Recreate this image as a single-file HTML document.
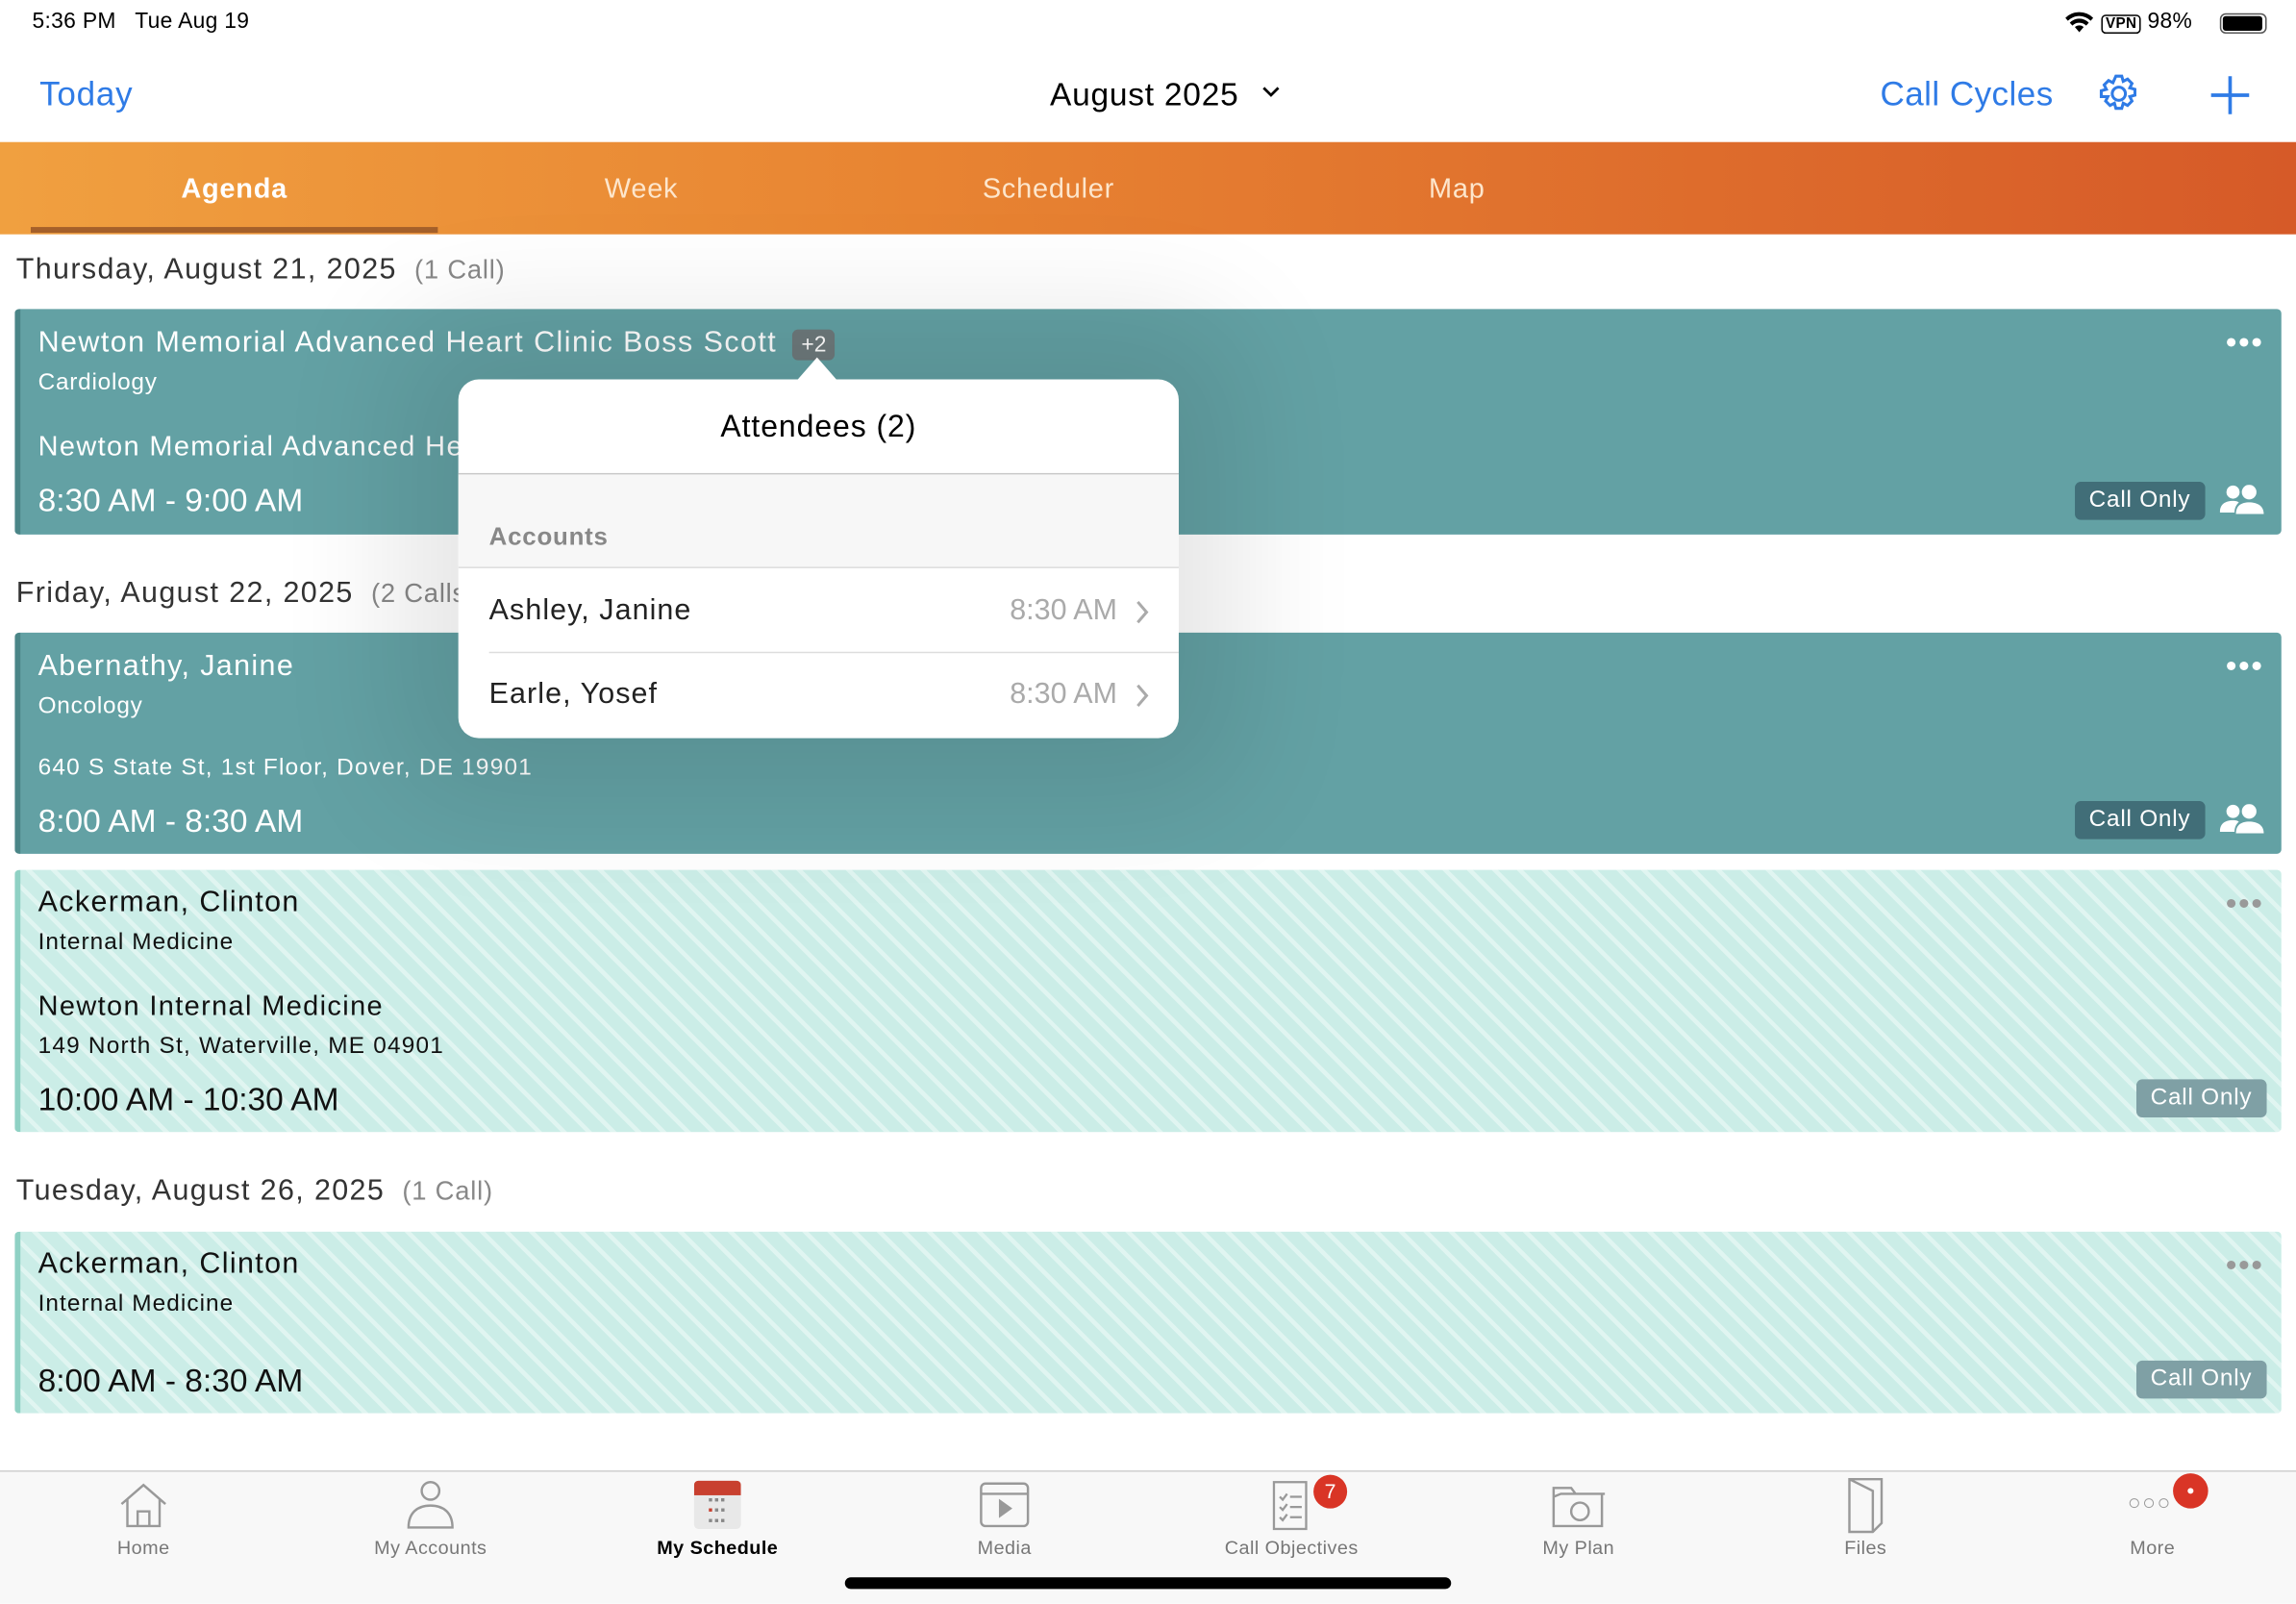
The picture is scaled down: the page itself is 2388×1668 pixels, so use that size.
<!DOCTYPE html>
<html><head><meta charset="utf-8"><style>
*{box-sizing:border-box;margin:0;padding:0}
html,body{width:2388px;height:1668px;overflow:hidden;background:#fff}
#w{width:1568px;height:1095px;transform:scale(1.52296);transform-origin:0 0;position:relative;font-family:"Liberation Sans",sans-serif;background:#fff;letter-spacing:.5px}
.abs{position:absolute}
.card{position:absolute;left:10px;width:1548px;border-left:4px solid #4a8587;border-radius:3px}
.t{background:#63a1a4;color:#fff}
.s{background:#cbede7 repeating-linear-gradient(45deg,#cbede7 0 9px,#e0f5f1 9px 12px);border-left-color:#8fd1c4;color:#111}
.co{position:absolute;background:#416e78;color:#fff;font-size:16px;padding:4px 10px;border-radius:4px;letter-spacing:.5px}
.s .co{background:#7fa0a5}
.dots{position:absolute;right:12px;font-size:22px;letter-spacing:1px;line-height:10px}
.tab{position:absolute;top:119px;font-size:19px;color:#fde6cc;width:278px;text-align:center}
.nav{position:absolute;top:1049px;font-size:13px;color:#777;width:196px;text-align:center;letter-spacing:.3px}
.ppl{position:absolute;right:12px}
</style></head><body><div id="w">
<div class="abs" style="left:22px;top:6px;font-size:15px;color:#000;letter-spacing:.2px">5:36 PM&nbsp;&nbsp; Tue Aug 19</div>
<svg class="abs" style="left:1410px;top:8px" width="20" height="15" viewBox="0 0 20 15"><path d="M10 14l3-3.5a4.5 4.5 0 0 0-6 0z M3.5 7.5a9 9 0 0 1 13 0l-1.8 2a6.5 6.5 0 0 0-9.4 0z M0.5 4.2a13.5 13.5 0 0 1 19 0l-1.7 2a11 11 0 0 0-15.6 0z" fill="#000"/></svg>
<div class="abs" style="left:1435px;top:6px;font-size:15px;color:#000;letter-spacing:.2px"><span style="border:1.5px solid #000;border-radius:3px;font-size:10px;padding:0 2px;font-weight:bold">VPN</span> 98%</div>
<div class="abs" style="right:20px;top:9px;width:32px;height:14px;border:1.5px solid #555;border-radius:4px;padding:1px"><div style="background:#000;height:100%;width:95%;border-radius:2px"></div></div>
<div class="abs" style="left:27px;top:51px;font-size:23px;color:#2f7be6">Today</div>
<div class="abs" style="left:717px;top:52px;font-size:22px;color:#000">August 2025</div>
<svg class="abs" style="left:861px;top:58px" width="14" height="10" fill="none" stroke="#000" stroke-width="1.8"><path d="M2 2l5 5 5-5"/></svg>
<div class="abs" style="left:1284px;top:51px;font-size:23px;color:#2f7be6;letter-spacing:.3px">Call Cycles</div>
<svg class="abs" style="left:1432px;top:49px" width="30" height="30" viewBox="0 0 30 30" fill="none" stroke="#2f7be6" stroke-width="2"><circle cx="15" cy="15" r="4.5"/><path d="M13 3h4l1 3.5 3-1.5 3 3-1.5 3 3.5 1v4l-3.5 1 1.5 3-3 3-3-1.5-1 3.5h-4l-1-3.5-3 1.5-3-3 1.5-3L3 17v-4l3.5-1L5 9l3-3 3 1.5z"/></svg>
<svg class="abs" style="left:1508px;top:50px" width="30" height="30" stroke="#2f7be6" stroke-width="2.4"><path d="M15 2v26M2 15h26"/></svg>
<div class="abs" style="left:0;top:97px;width:1568px;height:63px;background:linear-gradient(90deg,#f0a040,#e88432 40%,#d65a28)"></div>
<div class="tab" style="left:21px;color:#fff;font-weight:bold">Agenda</div>
<div class="abs" style="left:21px;top:155px;width:278px;height:4px;background:#a5602a"></div>
<div class="tab" style="left:299px">Week</div>
<div class="tab" style="left:577px">Scheduler</div>
<div class="tab" style="left:856px">Map</div>

<div class="abs" style="left:11px;top:173px;font-size:20px;color:#333;letter-spacing:.9px">Thursday, August 21, 2025 <span style="color:#888;font-size:18px;letter-spacing:.5px">&nbsp;(1 Call)</span></div>
<div class="card t" style="top:211px;height:154px">
 <div class="abs" style="left:12px;top:12px;font-size:20px;letter-spacing:.95px">Newton Memorial Advanced Heart Clinic Boss Scott <span style="background:#6e7a7c;font-size:15px;padding:2px 6px;border-radius:4px;margin-left:4px;letter-spacing:0">+2</span></div>
 <div class="abs" style="left:12px;top:42px;font-size:16px">Cardiology</div>
 <div class="abs" style="left:12px;top:84px;font-size:19px;letter-spacing:.9px">Newton Memorial Advanced Heart Clinic</div>
 <div class="abs" style="left:12px;top:118px;font-size:22px;letter-spacing:0">8:30 AM - 9:00 AM</div>
 <div class="dots" style="top:18px;color:#fff">•••</div>
 <div class="co" style="right:52px;top:118px">Call Only</div>
 <svg class="ppl" style="top:120px" width="30" height="20" viewBox="0 0 30 20" fill="#fff"><circle cx="9" cy="5" r="4.5"/><circle cx="20" cy="5" r="5"/><path d="M0 19c0-6 4-8 9-8 2 0 3 .4 4 1-2 2-3 4-3 7z M11 20c0-6 4-8 9-8s10 2 10 8z"/></svg>
</div>
<div class="abs" style="left:11px;top:394px;font-size:20px;color:#333;letter-spacing:.9px">Friday, August 22, 2025 <span style="color:#888;font-size:18px;letter-spacing:.5px">&nbsp;(2 Calls)</span></div>
<div class="card t" style="top:432px;height:151px">
 <div class="abs" style="left:12px;top:12px;font-size:20px;letter-spacing:.9px">Abernathy, Janine</div>
 <div class="abs" style="left:12px;top:42px;font-size:16px">Oncology</div>
 <div class="abs" style="left:12px;top:84px;font-size:16px;letter-spacing:.8px">640 S State St, 1st Floor, Dover, DE 19901</div>
 <div class="abs" style="left:12px;top:116px;font-size:22px;letter-spacing:0">8:00 AM - 8:30 AM</div>
 <div class="dots" style="top:18px;color:#fff">•••</div>
 <div class="co" style="right:52px;top:115px">Call Only</div>
 <svg class="ppl" style="top:117px" width="30" height="20" viewBox="0 0 30 20" fill="#fff"><circle cx="9" cy="5" r="4.5"/><circle cx="20" cy="5" r="5"/><path d="M0 19c0-6 4-8 9-8 2 0 3 .4 4 1-2 2-3 4-3 7z M11 20c0-6 4-8 9-8s10 2 10 8z"/></svg>
</div>
<div class="card s" style="top:594px;height:179px">
 <div class="abs" style="left:12px;top:11px;font-size:20px;letter-spacing:.9px">Ackerman, Clinton</div>
 <div class="abs" style="left:12px;top:41px;font-size:16px;letter-spacing:.7px">Internal Medicine</div>
 <div class="abs" style="left:12px;top:83px;font-size:19px;letter-spacing:.9px">Newton Internal Medicine</div>
 <div class="abs" style="left:12px;top:112px;font-size:16px;letter-spacing:.8px">149 North St, Waterville, ME 04901</div>
 <div class="abs" style="left:12px;top:144px;font-size:22px;letter-spacing:0">10:00 AM - 10:30 AM</div>
 <div class="dots" style="top:18px;color:#999">•••</div>
 <div class="co" style="right:10px;top:143px">Call Only</div>
</div>
<div class="abs" style="left:11px;top:802px;font-size:20px;color:#333;letter-spacing:.9px">Tuesday, August 26, 2025 <span style="color:#888;font-size:18px;letter-spacing:.5px">&nbsp;(1 Call)</span></div>
<div class="card s" style="top:841px;height:124px">
 <div class="abs" style="left:12px;top:11px;font-size:20px;letter-spacing:.9px">Ackerman, Clinton</div>
 <div class="abs" style="left:12px;top:41px;font-size:16px;letter-spacing:.7px">Internal Medicine</div>
 <div class="abs" style="left:12px;top:89px;font-size:22px;letter-spacing:0">8:00 AM - 8:30 AM</div>
 <div class="dots" style="top:18px;color:#999">•••</div>
 <div class="co" style="right:10px;top:88px">Call Only</div>
</div>

<div class="abs" style="left:313px;top:259px;width:492px;height:245px;background:#fff;border-radius:14px;box-shadow:0 0 90px 40px rgba(0,0,0,.1);overflow:hidden">
 <div style="height:65px;text-align:center;padding-top:21px;font-size:21px;color:#000;border-bottom:1px solid #c8c8c8;letter-spacing:.6px">Attendees (2)</div>
 <div style="height:64px;background:#f7f7f7;padding:33px 0 0 21px;font-size:17px;color:#888;font-weight:bold;border-bottom:1px solid #ddd">Accounts</div>
 <div style="height:58px;margin-left:21px;border-bottom:1px solid #ddd;position:relative;font-size:20px;color:#222;padding-top:18px;letter-spacing:.7px">Ashley, Janine<span style="position:absolute;right:42px;color:#aaa;letter-spacing:0">8:30 AM</span><svg style="position:absolute;right:20px;top:21px" width="10" height="18" fill="none" stroke="#aaa" stroke-width="2"><path d="M2 2l6 7-6 7"/></svg></div>
 <div style="height:58px;margin-left:21px;position:relative;font-size:20px;color:#222;padding-top:17px;letter-spacing:.7px">Earle, Yosef<span style="position:absolute;right:42px;color:#aaa;letter-spacing:0">8:30 AM</span><svg style="position:absolute;right:20px;top:20px" width="10" height="18" fill="none" stroke="#aaa" stroke-width="2"><path d="M2 2l6 7-6 7"/></svg></div>
</div>
<div class="abs" style="left:544px;top:244px;width:0;height:0;border-left:14px solid transparent;border-right:14px solid transparent;border-bottom:16px solid #fff"></div>

<div class="abs" style="left:0;top:1004px;width:1568px;height:91px;background:#f8f8f8;border-top:1px solid #d0d0d0"></div>
<svg class="abs" style="left:80px;top:1012px" width="36" height="32" fill="none" stroke="#999" stroke-width="1.6"><path d="M3 15L18 2l15 13M7 12v18h22V12M14 30v-10h8v10"/></svg>
<svg class="abs" style="left:276px;top:1010px" width="36" height="34" fill="none" stroke="#999" stroke-width="1.6"><circle cx="18" cy="8" r="6"/><path d="M3 33c0-10 6-15 15-15s15 5 15 15z"/></svg>
<div class="abs" style="left:474px;top:1011px;width:32px;height:33px;border-radius:3px;background:#e8e8e8;overflow:hidden"><div style="height:10px;background:#c8402f"></div><div style="font-size:9px;color:#888;text-align:center;line-height:7px;letter-spacing:1px">▪▪▪<br><span style="color:#c8402f">▪</span>▪▪<br>▪▪▪</div></div>
<svg class="abs" style="left:668px;top:1011px" width="36" height="33" fill="none" stroke="#999" stroke-width="1.6"><rect x="2" y="2" width="32" height="29" rx="3"/><path d="M2 9h32"/><path d="M15 14l7 5-7 5z" fill="#999"/></svg>
<svg class="abs" style="left:868px;top:1010px" width="28" height="36" fill="none" stroke="#999" stroke-width="1.5"><rect x="2" y="2" width="22" height="32"/><path d="M6 12l2 2 3-4M13 12h8M6 19l2 2 3-4M13 19h8M6 26l2 2 3-4M13 26h8"/></svg>
<div class="abs" style="left:897px;top:1007px;width:23px;height:23px;border-radius:50%;background:#d93526;color:#fff;font-size:14px;text-align:center;line-height:23px;letter-spacing:0">7</div>
<svg class="abs" style="left:1059px;top:1012px" width="40" height="32" fill="none" stroke="#999" stroke-width="1.6"><path d="M2 4h12l3 4h18v22H2zM2 10l5-2h30"/><circle cx="20" cy="20" r="6"/></svg>
<svg class="abs" style="left:1260px;top:1008px" width="28" height="40" fill="none" stroke="#999" stroke-width="1.6"><path d="M3 2h22v30l-6 6H3zM3 2l16 8v28"/></svg>
<div class="abs" style="left:1453px;top:1018px;font-size:15px;color:#999;letter-spacing:1px">○○○</div>
<div class="abs" style="left:1484px;top:1006px;width:24px;height:24px;border-radius:50%;background:#d93526"><div style="width:4px;height:4px;background:#fff;border-radius:50%;margin:10px auto"></div></div>
<div class="nav" style="left:0">Home</div>
<div class="nav" style="left:196px">My Accounts</div>
<div class="nav" style="left:392px;color:#000;font-weight:bold">My Schedule</div>
<div class="nav" style="left:588px">Media</div>
<div class="nav" style="left:784px">Call Objectives</div>
<div class="nav" style="left:980px">My Plan</div>
<div class="nav" style="left:1176px">Files</div>
<div class="nav" style="left:1372px">More</div>
<div class="abs" style="left:577px;top:1077px;width:414px;height:8px;border-radius:4px;background:#000"></div>
</div></body></html>
